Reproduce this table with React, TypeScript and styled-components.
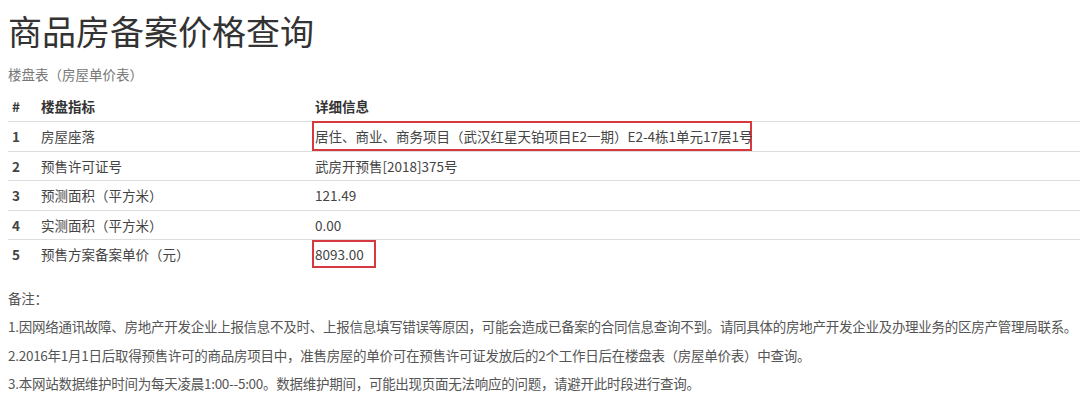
import React from "react";
import styled, { createGlobalStyle } from "styled-components";

const Global = createGlobalStyle`
  html, body { margin: 0; padding: 0; background: #ffffff; }
  body {
    font-family: "Noto Sans CJK SC", "Liberation Sans", sans-serif;
    color: #333;
  }
`;

const Page = styled.div`
  width: 1080px;
  height: 402px;
  overflow: hidden;
  padding-left: 8px;
  box-sizing: border-box;
`;

const Title = styled.h1`
  margin: 11px 0 0;
  font-size: 34px;
  line-height: 40px;
  font-weight: 400;
  color: #333;
`;

const Subtitle = styled.div`
  margin-top: 13px;
  font-size: 13.5px;
  line-height: 20px;
  color: #777;
`;

const Table = styled.div`
  margin-top: 6px;
  display: grid;
  grid-template-columns: 29px 274px 1fr;
  font-size: 13.5px;
`;

const HeadCell = styled.div`
  height: 31px;
  padding-left: 4px;
  display: flex;
  align-items: center;
  font-weight: 700;
  color: #333;
  border-bottom: 1px solid #ddd;
`;

const Cell = styled.div<{ $bold?: boolean; $last?: boolean }>`
  height: 28.5px;
  padding-left: 4px;
  display: flex;
  align-items: center;
  color: #444;
  font-weight: ${(p) => (p.$bold ? 700 : 400)};
  border-bottom: ${(p) => (p.$last ? "none" : "1px solid #ddd")};
`;

const Highlight = styled.span<{ $w: number; $h: number }>`
  display: inline-flex;
  align-items: center;
  box-sizing: border-box;
  width: ${(p) => p.$w}px;
  height: ${(p) => p.$h}px;
  margin-left: -3px;
  padding-left: 1px;
  border: 2px solid #d63a40;
  white-space: nowrap;
  position: relative;
  z-index: 1;
`;

const Notes = styled.div`
  margin-top: 15px;
  font-size: 13.5px;
  letter-spacing: -0.27px;
  line-height: 28.5px;
  color: #555;
  white-space: nowrap;
`;

const NoteLine = styled.div``;

type Row = { n: string; k: string; v: React.ReactNode };

const rows: Row[] = [
  {
    n: "1",
    k: "房屋座落",
    v: (
      <Highlight $w={440} $h={30}>
        居住、商业、商务项目（武汉红星天铂项目E2一期）E2-4栋1单元17层1号
      </Highlight>
    ),
  },
  { n: "2", k: "预售许可证号", v: "武房开预售[2018]375号" },
  { n: "3", k: "预测面积（平方米）", v: "121.49" },
  { n: "4", k: "实测面积（平方米）", v: "0.00" },
  {
    n: "5",
    k: "预售方案备案单价（元）",
    v: (
      <Highlight $w={64} $h={28}>
        8093.00
      </Highlight>
    ),
  },
];

export default function App() {
  return (
    <Page>
      <Global />
      <Title>商品房备案价格查询</Title>
      <Subtitle>楼盘表（房屋单价表）</Subtitle>
      <Table>
        <HeadCell>#</HeadCell>
        <HeadCell>楼盘指标</HeadCell>
        <HeadCell>详细信息</HeadCell>
        {rows.map((r, i) => {
          const last = i === rows.length - 1;
          return (
            <React.Fragment key={r.n}>
              <Cell $bold $last={last}>{r.n}</Cell>
              <Cell $last={last}>{r.k}</Cell>
              <Cell $last={last}>{r.v}</Cell>
            </React.Fragment>
          );
        })}
      </Table>
      <Notes>
        <NoteLine>备注：</NoteLine>
        <NoteLine>
          1.因网络通讯故障、房地产开发企业上报信息不及时、上报信息填写错误等原因，可能会造成已备案的合同信息查询不到。请同具体的房地产开发企业及办理业务的区房产管理局联系。
        </NoteLine>
        <NoteLine>
          2.2016年1月1日后取得预售许可的商品房项目中，准售房屋的单价可在预售许可证发放后的2个工作日后在楼盘表（房屋单价表）中查询。
        </NoteLine>
        <NoteLine>
          3.本网站数据维护时间为每天凌晨1:00--5:00。数据维护期间，可能出现页面无法响应的问题，请避开此时段进行查询。
        </NoteLine>
      </Notes>
    </Page>
  );
}
